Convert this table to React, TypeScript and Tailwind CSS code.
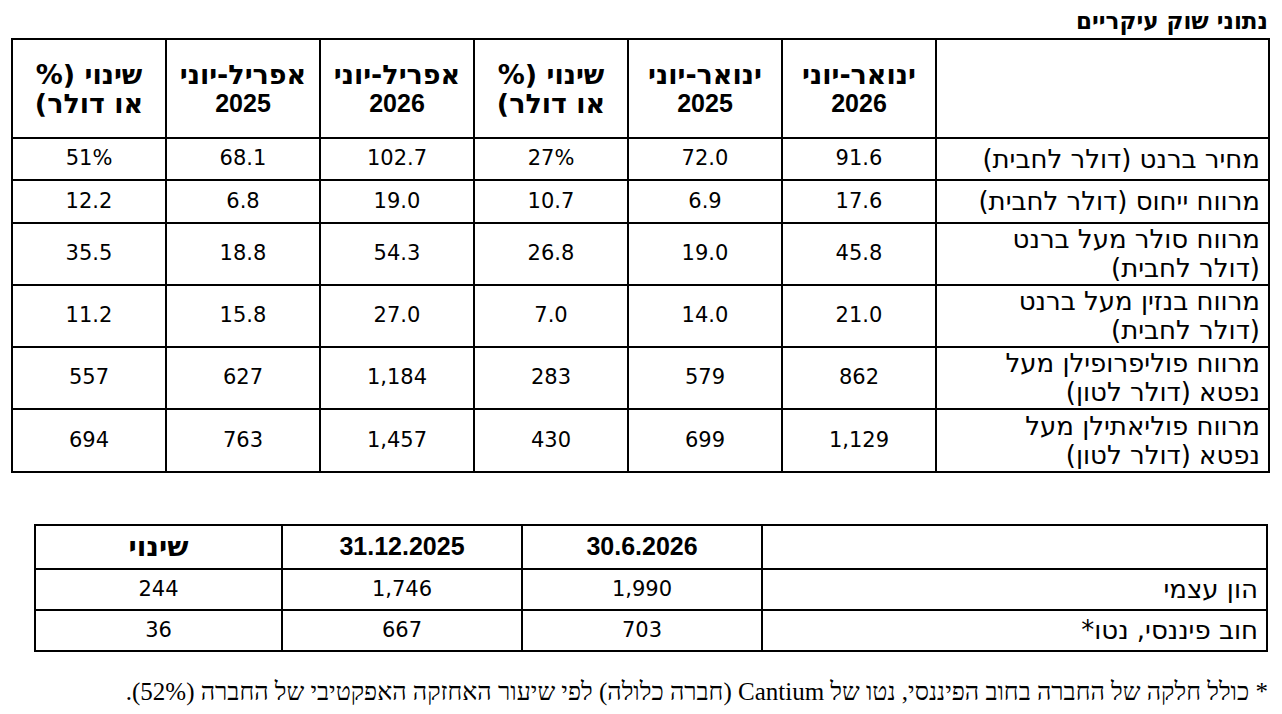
import React from "react";

const heb = "font-['DejaVu_Sans','Liberation_Sans',sans-serif]";
const num = "font-['DejaVu_Sans','Liberation_Sans',sans-serif]";
const boldNum = "font-['Liberation_Sans','DejaVu_Sans',sans-serif]";

const headers = [
  ["ינואר-יוני", "2026"],
  ["ינואר-יוני", "2025"],
  ["שינוי (%", "או דולר)"],
  ["אפריל-יוני", "2026"],
  ["אפריל-יוני", "2025"],
  ["שינוי (%", "או דולר)"],
];

const marketRows: { label: string[]; values: string[]; h: string }[] = [
  { label: ["מחיר ברנט (דולר לחבית)"], values: ["91.6", "72.0", "27%", "102.7", "68.1", "51%"], h: "h-[42px]" },
  { label: ["מרווח ייחוס (דולר לחבית)"], values: ["17.6", "6.9", "10.7", "19.0", "6.8", "12.2"], h: "h-[43px]" },
  { label: ["מרווח סולר מעל ברנט", "(דולר לחבית)"], values: ["45.8", "19.0", "26.8", "54.3", "18.8", "35.5"], h: "h-[62px]" },
  { label: ["מרווח בנזין מעל ברנט", "(דולר לחבית)"], values: ["21.0", "14.0", "7.0", "27.0", "15.8", "11.2"], h: "h-[62px]" },
  { label: ["מרווח פוליפרופילן מעל", "נפטא (דולר לטון)"], values: ["862", "579", "283", "1,184", "627", "557"], h: "h-[62px]" },
  { label: ["מרווח פוליאתילן מעל", "נפטא (דולר לטון)"], values: ["1,129", "699", "430", "1,457", "763", "694"], h: "h-[63px]" },
];

const balanceRows = [
  { label: "הון עצמי", values: ["1,990", "1,746", "244"] },
  { label: "חוב פיננסי, נטו*", values: ["703", "667", "36"] },
];

export default function App() {
  return (
    <div dir="rtl" className="w-[1282px] h-[714px] bg-white text-black overflow-hidden">
      <div className={`${heb} font-bold text-[23px] leading-none pt-[10px] pr-[14px]`}>
        נתוני שוק עיקריים
      </div>

      <div className="pr-[12px] pt-[5px]">
        <table className="table-fixed border-collapse border-2 border-black w-[1257px]">
          <colgroup>
            <col className="w-[333px]" />
            {headers.map((_, i) => (
              <col key={i} className="w-[154px]" />
            ))}
          </colgroup>
          <thead>
            <tr className="h-[99px]">
              <th className="border-2 border-black"></th>
              {headers.map((h, i) => (
                <th key={i} className="border-2 border-black text-center font-bold leading-[29px]">
                  <div className={`${heb} text-[27px]`}>{h[0]}</div>
                  <div className={i === 2 || i === 5 ? `${heb} text-[27px]` : `${boldNum} text-[25px]`}>{h[1]}</div>
                </th>
              ))}
            </tr>
          </thead>
          <tbody>
            {marketRows.map((r, i) => (
              <tr key={i} className={r.h}>
                <td className={`border-2 border-black text-right pr-[8px] text-[26px] leading-[29px] ${heb}`}>
                  {r.label.map((l, j) => (
                    <div key={j}>{l}</div>
                  ))}
                </td>
                {r.values.map((v, j) => (
                  <td key={j} className={`border-2 border-black text-center text-[21px] ${num}`}>
                    <span dir="ltr">{v}</span>
                  </td>
                ))}
              </tr>
            ))}
          </tbody>
        </table>
      </div>

      <div className="pr-[14px] pt-[51px]">
        <table className="table-fixed border-collapse border-2 border-black w-[1232px]">
          <colgroup>
            <col className="w-[505px]" />
            <col className="w-[240px]" />
            <col className="w-[240px]" />
            <col className="w-[247px]" />
          </colgroup>
          <thead>
            <tr className="h-[43px]">
              <th className="border-2 border-black"></th>
              <th className={`border-2 border-black text-center font-bold text-[25px] ${boldNum}`}>30.6.2026</th>
              <th className={`border-2 border-black text-center font-bold text-[25px] ${boldNum}`}>31.12.2025</th>
              <th className={`border-2 border-black text-center font-bold text-[28px] ${heb}`}>שינוי</th>
            </tr>
          </thead>
          <tbody>
            {balanceRows.map((r, i) => (
              <tr key={i} className="h-[41px]">
                <td className={`border-2 border-black text-right pr-[8px] text-[26px] ${heb}`}>{r.label}</td>
                {r.values.map((v, j) => (
                  <td key={j} className={`border-2 border-black text-center text-[21px] ${num}`}>
                    <span dir="ltr">{v}</span>
                  </td>
                ))}
              </tr>
            ))}
          </tbody>
        </table>
      </div>

      <p className="pr-[14px] pt-[27px] text-[25px] leading-none font-['Liberation_Serif','DejaVu_Serif',serif]">
        * כולל חלקה של החברה בחוב הפיננסי, נטו של Cantium (חברה כלולה) לפי שיעור האחזקה האפקטיבי של החברה (52%).
      </p>
    </div>
  );
}
